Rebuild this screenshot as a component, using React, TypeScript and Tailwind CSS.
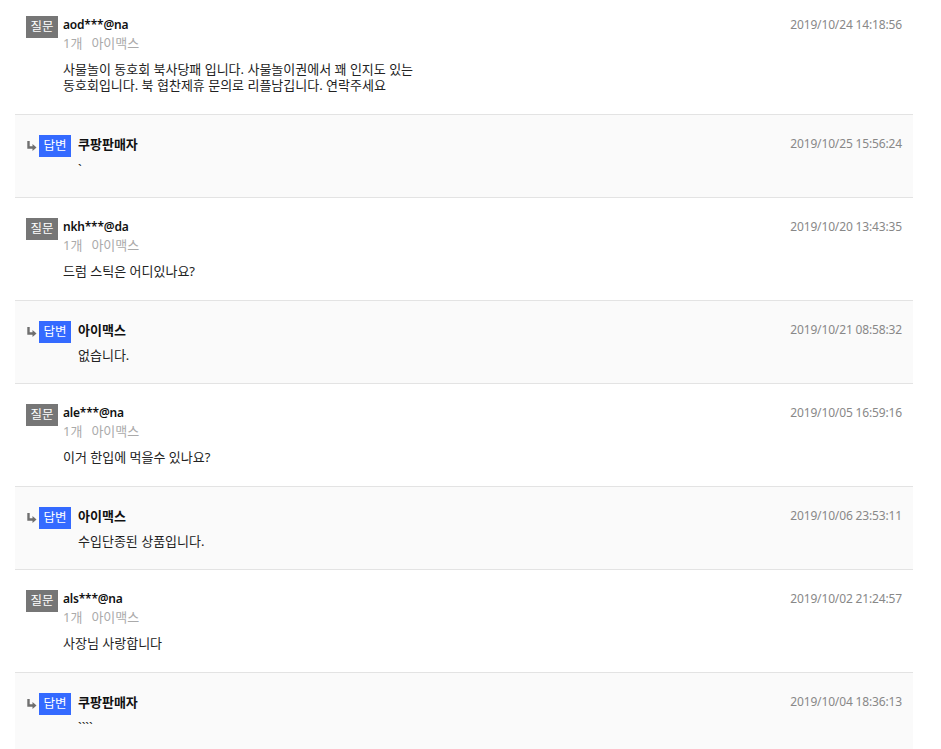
import React from "react";

type Item = {
  user: string;
  qDate: string;
  q: React.ReactNode;
  aName: string;
  aDate: string;
  a: string;
};

const items: Item[] = [
  {
    user: "aod***@na",
    qDate: "2019/10/24 14:18:56",
    q: (
      <>
        사물놀이 동호회 북사당패 입니다. 사물놀이권에서 꽤 인지도 있는
        <br />
        동호회입니다. 북 협찬제휴 문의로 리플남깁니다. 연락주세요
      </>
    ),
    aName: "쿠팡판매자",
    aDate: "2019/10/25 15:56:24",
    a: "`",
  },
  {
    user: "nkh***@da",
    qDate: "2019/10/20 13:43:35",
    q: "드럼 스틱은 어디있나요?",
    aName: "아이맥스",
    aDate: "2019/10/21 08:58:32",
    a: "없습니다.",
  },
  {
    user: "ale***@na",
    qDate: "2019/10/05 16:59:16",
    q: "이거 한입에 먹을수 있나요?",
    aName: "아이맥스",
    aDate: "2019/10/06 23:53:11",
    a: "수입단종된 상품입니다.",
  },
  {
    user: "als***@na",
    qDate: "2019/10/02 21:24:57",
    q: "사장님 사랑합니다",
    aName: "쿠팡판매자",
    aDate: "2019/10/04 18:36:13",
    a: "````",
  },
];

function Arrow() {
  return (
    <svg width="10" height="10" viewBox="0 0 10 10" className="shrink-0">
      <path d="M1.5 0 V6.5 H6" stroke="#6f6f6f" strokeWidth="2.4" fill="none" />
      <path d="M5.5 3 L9.5 6.5 L5.5 10 Z" fill="#6f6f6f" />
    </svg>
  );
}

export default function App() {
  return (
    <div
      className="w-[941px] bg-white text-[12px]"
      style={{ fontFamily: '"Noto Sans", "Noto Sans CJK KR", sans-serif' }}
    >
      <div className="ml-[15px] w-[898px]">
        {items.map((it, i) => (
          <React.Fragment key={i}>
            <div
              className={`flex border-b border-[#e3e3e3] bg-white pl-[11px] pr-[11px] pb-[21px] ${
                i === 0 ? "pt-[16px]" : "pt-[20px]"
              }`}
            >
              <div className="flex h-[22px] w-[32px] shrink-0 items-center justify-center bg-[#767676] text-[12.5px] text-white">
                질문
              </div>
              <div className="ml-[5px] flex-1">
                <div className="flex items-start justify-between">
                  <div className="text-[12px] font-semibold leading-[18px] tracking-[-0.2px] text-[#111]">
                    {it.user}
                  </div>
                  <div className="text-[12px] leading-[18px] tracking-[-0.15px] text-[#888]">
                    {it.qDate}
                  </div>
                </div>
                <div className="flex gap-[9px] text-[13px] leading-[18px] text-[#aaa]">
                  <span>1개</span>
                  <span>아이맥스</span>
                </div>
                <div className="mt-[9px] text-[13px] leading-[16px] text-[#222]">
                  {it.q}
                </div>
              </div>
            </div>
            <div className="flex border-b border-[#e3e3e3] bg-[#fafafa] pb-[20px] pl-[12px] pr-[11px] pt-[20px]">
              <div className="flex h-[22px] items-center">
                <Arrow />
              </div>
              <div className="ml-[2px] flex h-[22px] w-[32px] shrink-0 items-center justify-center bg-[#346aff] text-[12.5px] text-white">
                답변
              </div>
              <div className="ml-[7px] flex-1">
                <div className="flex items-start justify-between">
                  <div className="text-[13px] font-bold leading-[18px] text-[#111]">
                    {it.aName}
                  </div>
                  <div className="text-[12px] leading-[18px] tracking-[-0.15px] text-[#888]">
                    {it.aDate}
                  </div>
                </div>
                <div className="mt-[8px] h-[16px] text-[13px] leading-[16px] text-[#222]">
                  {it.a}
                </div>
              </div>
            </div>
          </React.Fragment>
        ))}
      </div>
    </div>
  );
}
